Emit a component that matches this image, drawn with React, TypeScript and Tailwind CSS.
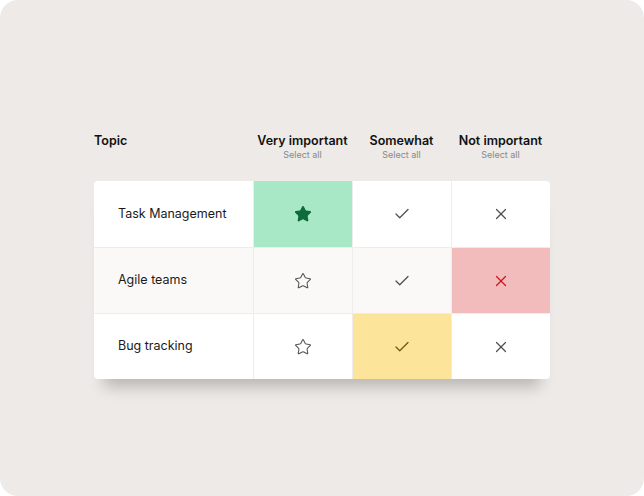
import { Star, Check, X } from 'lucide-react';

type Mark = 'star' | 'check' | 'x';

interface Row {
  topic: string;
  selected: Mark;
  shaded?: boolean;
}

const rows: Row[] = [
  { topic: 'Task Management', selected: 'star' },
  { topic: 'Agile teams', selected: 'x', shaded: true },
  { topic: 'Bug tracking', selected: 'check' },
];

const columns = [
  { label: 'Very important', mark: 'star' as Mark },
  { label: 'Somewhat', mark: 'check' as Mark },
  { label: 'Not important', mark: 'x' as Mark },
];

function Cell({ mark, active, shaded }: { mark: Mark; active: boolean; shaded?: boolean }) {
  const base = 'flex items-center justify-center border-l border-[#efedeb]';
  if (mark === 'star') {
    return (
      <div className={`${base} ${active ? 'bg-[#a8e8c6]' : shaded ? 'bg-[#faf9f8]' : 'bg-white'}`}>
        {active ? (
          <Star size={18} strokeWidth={1.5} className="text-[#0e6b3c] fill-[#0e6b3c]" />
        ) : (
          <Star size={18} strokeWidth={1.4} className="text-[#555555]" />
        )}
      </div>
    );
  }
  if (mark === 'check') {
    return (
      <div className={`${base} ${active ? 'bg-[#fde49b]' : shaded ? 'bg-[#faf9f8]' : 'bg-white'}`}>
        <Check size={18} strokeWidth={1.7} className={active ? 'text-[#6e5a0c]' : 'text-[#4f4f4f]'} />
      </div>
    );
  }
  return (
    <div className={`${base} ${active ? 'bg-[#f3bcbc]' : shaded ? 'bg-[#faf9f8]' : 'bg-white'}`}>
      <X size={18} strokeWidth={1.6} className={active ? 'text-[#c8161f]' : 'text-[#4f4f4f]'} />
    </div>
  );
}

export default function App() {
  return (
    <div className="w-[644px] h-[496px] bg-white" style={{ fontFamily: 'Inter, "Noto Sans", sans-serif' }}>
      <div className="w-full h-full rounded-[18px] bg-[#edeae7] pt-[133px] pl-[94px]">
        {/* Header */}
        <div className="grid grid-cols-[159px_99px_99px_99px] w-[456px]">
          <div className="text-[12.5px] leading-[16px] font-semibold text-[#111111]">Topic</div>
          {columns.map((c) => (
            <div key={c.label} className="flex flex-col items-center">
              <span className="text-[12.5px] leading-[16px] font-semibold text-[#111111] whitespace-nowrap">
                {c.label}
              </span>
              <span className="text-[9px] leading-[11px] text-[#8a8886]">Select all</span>
            </div>
          ))}
        </div>

        {/* Table */}
        <div className="mt-[21px] w-[456px] rounded-[4px] overflow-hidden shadow-[0_18px_14px_-10px_rgba(0,0,0,0.22)]">
          {rows.map((r, i) => (
            <div
              key={r.topic}
              className={`grid grid-cols-[159px_99px_99px_99px] h-[66px] ${i > 0 ? 'border-t border-[#efedeb]' : ''}`}
            >
              <div
                className={`flex items-center pl-[24px] text-[12.5px] text-[#1a1a1a] ${r.shaded ? 'bg-[#faf9f8]' : 'bg-white'}`}
              >
                {r.topic}
              </div>
              {columns.map((c) => (
                <Cell key={c.label} mark={c.mark} active={r.selected === c.mark} shaded={r.shaded} />
              ))}
            </div>
          ))}
        </div>
      </div>
    </div>
  );
}
